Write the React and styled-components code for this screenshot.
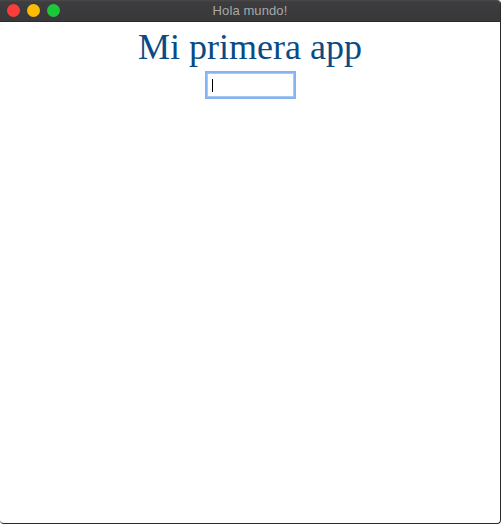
import React from "react";
import styled, { createGlobalStyle } from "styled-components";

const Global = createGlobalStyle`
  html, body { margin: 0; padding: 0; background: #ffffff; }
  body { width: 501px; height: 524px; overflow: hidden; }
`;

const Window = styled.div`
  box-sizing: border-box;
  width: 501px;
  height: 524px;
  display: flex;
  flex-direction: column;
  background: #ffffff;
  border-right: 1px solid #2a2a2a;
  border-bottom: 1px solid #2a2a2a;
  border-radius: 0 4px 4px 4px;
  overflow: hidden;
`;

const TitleBar = styled.div`
  position: relative;
  height: 22px;
  flex: none;
  display: flex;
  align-items: center;
  justify-content: center;
  background: linear-gradient(#4a4a4c 0, #3d3d3f 2px, #38383a 100%);
  border-bottom: 1px solid #2c2c2e;
  box-sizing: border-box;
`;

const Lights = styled.div`
  position: absolute;
  left: 7px;
  top: 4px;
  display: flex;
  gap: 7px;
`;

const Light = styled.span`
  width: 13px;
  height: 13px;
  border-radius: 50%;
  background: ${(p) => p.$color};
`;

const Title = styled.span`
  font-family: "Liberation Sans", Arial, sans-serif;
  font-size: 13px;
  color: #a8a8a8;
  letter-spacing: 0.1px;
`;

const Content = styled.main`
  flex: 1;
  display: flex;
  flex-direction: column;
  align-items: center;
`;

const Heading = styled.h1`
  margin: 5px 0 0;
  font-family: "Liberation Serif", "Times New Roman", serif;
  font-weight: normal;
  font-size: 36px;
  line-height: 41px;
  color: #0a4b83;
`;

const Field = styled.div`
  position: relative;
  margin-top: 5px;
`;

const Input = styled.input`
  box-sizing: border-box;
  display: block;
  width: 87px;
  height: 24px;
  margin: 0;
  padding: 0 4px;
  border: 1px solid #a9c8f3;
  outline: none;
  box-shadow: 0 0 0 2px #86b3f1;
  background: #ffffff;
  caret-color: transparent;
  font-family: "Liberation Sans", Arial, sans-serif;
  font-size: 13px;
`;

const Caret = styled.span`
  position: absolute;
  left: 5px;
  top: 6px;
  width: 1px;
  height: 13px;
  background: #000000;
  pointer-events: none;
`;

export default function App() {
  return (
    <>
      <Global />
      <Window>
        <TitleBar>
          <Lights>
            <Light $color="#fc3d39" />
            <Light $color="#fdbc00" />
            <Light $color="#19c937" />
          </Lights>
          <Title>Hola mundo!</Title>
        </TitleBar>
        <Content>
          <Heading>Mi primera app</Heading>
          <Field>
            <Input type="text" aria-label="texto" />
            <Caret />
          </Field>
        </Content>
      </Window>
    </>
  );
}
